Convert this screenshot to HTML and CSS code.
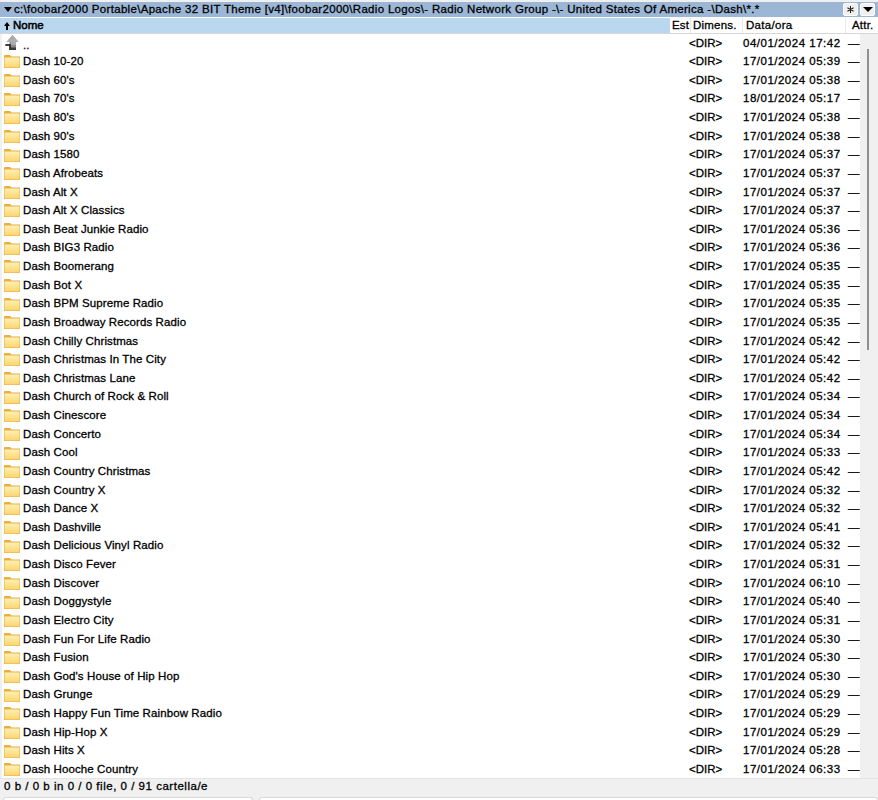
FILE: index.html
```html
<!DOCTYPE html>
<html lang="it">
<head>
<meta charset="utf-8">
<title>Total Commander</title>
<link rel="stylesheet" href="styles.css">
</head>
<body>
<svg class="defs" width="0" height="0" aria-hidden="true">
  <defs>
    <linearGradient id="fg" x1="0" y1="0" x2="0" y2="1"><stop offset="0" stop-color="#fff0b4"/><stop offset="1" stop-color="#fbd56f"/></linearGradient>
    <symbol id="folder" viewBox="0 0 16 13">
      <path d="M0 2V1Q0 0 1 0H6L7.5 1.5H16V13H0Z" fill="#e8ae3e"/>
      <rect x="0.5" y="2.5" width="15" height="10" fill="url(#fg)"/>
    </symbol>
  </defs>
</svg>
<div class="pathbar">
  <svg class="caret" viewBox="0 0 8 5"><path d="M0 0H8L4 5Z"/></svg>
  <span class="pathtext">c:\foobar2000 Portable\Apache 32 BIT Theme [v4]\foobar2000\Radio Logos\- Radio Network Group -\- United States Of America -\Dash\*.*</span>
  <span class="btn"><svg class="star" viewBox="0 0 8 8"><path d="M4 0V8M0.5 2L7.5 6M7.5 2L0.5 6" stroke="#222" stroke-width="1.2" fill="none"/></svg></span>
  <span class="btn"><svg class="btncaret" viewBox="0 0 10 5"><path d="M0 0H10L5 5Z"/></svg></span>
</div>
<div class="header row">
  <span class="c-name"><svg class="uparrow" viewBox="0 0 6 8"><path d="M3 0L6 4H4V8H2V4H0Z"/></svg>Nome</span>
  <span class="c-ext">Est</span>
  <span class="c-size">Dimens.</span>
  <span class="c-date">Data/ora</span>
  <span class="c-attr">Attr.</span>
</div>
<div class="panel">
  <div class="list">
    <div class="row"><span class="c-name"><svg class="icon upicon" viewBox="0 0 16 16"><path d="M7.5 0L13.5 7H11V15H4V11H0.5V9H4.5V7H1.5Z" fill="#8b8b8b"/><path d="M7.5 0L13.5 7H11V10H6V7H1.5Z" fill="#adadad"/><path d="M4 15V11H0.5V9H6V12.5H11V15Z" fill="#3a3a3a"/></svg><span class="up">..</span></span><span class="c-ext"></span><span class="c-size">&lt;DIR&gt;</span><span class="c-date">04/01/2024 17:42</span><span class="c-attr">—</span></div>
    <div class="row"><span class="c-name"><svg class="icon"><use href="#folder"/></svg>Dash 10-20</span><span class="c-ext"></span><span class="c-size">&lt;DIR&gt;</span><span class="c-date">17/01/2024 05:39</span><span class="c-attr">—</span></div>
    <div class="row"><span class="c-name"><svg class="icon"><use href="#folder"/></svg>Dash 60's</span><span class="c-ext"></span><span class="c-size">&lt;DIR&gt;</span><span class="c-date">17/01/2024 05:38</span><span class="c-attr">—</span></div>
    <div class="row"><span class="c-name"><svg class="icon"><use href="#folder"/></svg>Dash 70's</span><span class="c-ext"></span><span class="c-size">&lt;DIR&gt;</span><span class="c-date">18/01/2024 05:17</span><span class="c-attr">—</span></div>
    <div class="row"><span class="c-name"><svg class="icon"><use href="#folder"/></svg>Dash 80's</span><span class="c-ext"></span><span class="c-size">&lt;DIR&gt;</span><span class="c-date">17/01/2024 05:38</span><span class="c-attr">—</span></div>
    <div class="row"><span class="c-name"><svg class="icon"><use href="#folder"/></svg>Dash 90's</span><span class="c-ext"></span><span class="c-size">&lt;DIR&gt;</span><span class="c-date">17/01/2024 05:38</span><span class="c-attr">—</span></div>
    <div class="row"><span class="c-name"><svg class="icon"><use href="#folder"/></svg>Dash 1580</span><span class="c-ext"></span><span class="c-size">&lt;DIR&gt;</span><span class="c-date">17/01/2024 05:37</span><span class="c-attr">—</span></div>
    <div class="row"><span class="c-name"><svg class="icon"><use href="#folder"/></svg>Dash Afrobeats</span><span class="c-ext"></span><span class="c-size">&lt;DIR&gt;</span><span class="c-date">17/01/2024 05:37</span><span class="c-attr">—</span></div>
    <div class="row"><span class="c-name"><svg class="icon"><use href="#folder"/></svg>Dash Alt X</span><span class="c-ext"></span><span class="c-size">&lt;DIR&gt;</span><span class="c-date">17/01/2024 05:37</span><span class="c-attr">—</span></div>
    <div class="row"><span class="c-name"><svg class="icon"><use href="#folder"/></svg>Dash Alt X Classics</span><span class="c-ext"></span><span class="c-size">&lt;DIR&gt;</span><span class="c-date">17/01/2024 05:37</span><span class="c-attr">—</span></div>
    <div class="row"><span class="c-name"><svg class="icon"><use href="#folder"/></svg>Dash Beat Junkie Radio</span><span class="c-ext"></span><span class="c-size">&lt;DIR&gt;</span><span class="c-date">17/01/2024 05:36</span><span class="c-attr">—</span></div>
    <div class="row"><span class="c-name"><svg class="icon"><use href="#folder"/></svg>Dash BIG3 Radio</span><span class="c-ext"></span><span class="c-size">&lt;DIR&gt;</span><span class="c-date">17/01/2024 05:36</span><span class="c-attr">—</span></div>
    <div class="row"><span class="c-name"><svg class="icon"><use href="#folder"/></svg>Dash Boomerang</span><span class="c-ext"></span><span class="c-size">&lt;DIR&gt;</span><span class="c-date">17/01/2024 05:35</span><span class="c-attr">—</span></div>
    <div class="row"><span class="c-name"><svg class="icon"><use href="#folder"/></svg>Dash Bot X</span><span class="c-ext"></span><span class="c-size">&lt;DIR&gt;</span><span class="c-date">17/01/2024 05:35</span><span class="c-attr">—</span></div>
    <div class="row"><span class="c-name"><svg class="icon"><use href="#folder"/></svg>Dash BPM Supreme Radio</span><span class="c-ext"></span><span class="c-size">&lt;DIR&gt;</span><span class="c-date">17/01/2024 05:35</span><span class="c-attr">—</span></div>
    <div class="row"><span class="c-name"><svg class="icon"><use href="#folder"/></svg>Dash Broadway Records Radio</span><span class="c-ext"></span><span class="c-size">&lt;DIR&gt;</span><span class="c-date">17/01/2024 05:35</span><span class="c-attr">—</span></div>
    <div class="row"><span class="c-name"><svg class="icon"><use href="#folder"/></svg>Dash Chilly Christmas</span><span class="c-ext"></span><span class="c-size">&lt;DIR&gt;</span><span class="c-date">17/01/2024 05:42</span><span class="c-attr">—</span></div>
    <div class="row"><span class="c-name"><svg class="icon"><use href="#folder"/></svg>Dash Christmas In The City</span><span class="c-ext"></span><span class="c-size">&lt;DIR&gt;</span><span class="c-date">17/01/2024 05:42</span><span class="c-attr">—</span></div>
    <div class="row"><span class="c-name"><svg class="icon"><use href="#folder"/></svg>Dash Christmas Lane</span><span class="c-ext"></span><span class="c-size">&lt;DIR&gt;</span><span class="c-date">17/01/2024 05:42</span><span class="c-attr">—</span></div>
    <div class="row"><span class="c-name"><svg class="icon"><use href="#folder"/></svg>Dash Church of Rock &amp; Roll</span><span class="c-ext"></span><span class="c-size">&lt;DIR&gt;</span><span class="c-date">17/01/2024 05:34</span><span class="c-attr">—</span></div>
    <div class="row"><span class="c-name"><svg class="icon"><use href="#folder"/></svg>Dash Cinescore</span><span class="c-ext"></span><span class="c-size">&lt;DIR&gt;</span><span class="c-date">17/01/2024 05:34</span><span class="c-attr">—</span></div>
    <div class="row"><span class="c-name"><svg class="icon"><use href="#folder"/></svg>Dash Concerto</span><span class="c-ext"></span><span class="c-size">&lt;DIR&gt;</span><span class="c-date">17/01/2024 05:34</span><span class="c-attr">—</span></div>
    <div class="row"><span class="c-name"><svg class="icon"><use href="#folder"/></svg>Dash Cool</span><span class="c-ext"></span><span class="c-size">&lt;DIR&gt;</span><span class="c-date">17/01/2024 05:33</span><span class="c-attr">—</span></div>
    <div class="row"><span class="c-name"><svg class="icon"><use href="#folder"/></svg>Dash Country Christmas</span><span class="c-ext"></span><span class="c-size">&lt;DIR&gt;</span><span class="c-date">17/01/2024 05:42</span><span class="c-attr">—</span></div>
    <div class="row"><span class="c-name"><svg class="icon"><use href="#folder"/></svg>Dash Country X</span><span class="c-ext"></span><span class="c-size">&lt;DIR&gt;</span><span class="c-date">17/01/2024 05:32</span><span class="c-attr">—</span></div>
    <div class="row"><span class="c-name"><svg class="icon"><use href="#folder"/></svg>Dash Dance X</span><span class="c-ext"></span><span class="c-size">&lt;DIR&gt;</span><span class="c-date">17/01/2024 05:32</span><span class="c-attr">—</span></div>
    <div class="row"><span class="c-name"><svg class="icon"><use href="#folder"/></svg>Dash Dashville</span><span class="c-ext"></span><span class="c-size">&lt;DIR&gt;</span><span class="c-date">17/01/2024 05:41</span><span class="c-attr">—</span></div>
    <div class="row"><span class="c-name"><svg class="icon"><use href="#folder"/></svg>Dash Delicious Vinyl Radio</span><span class="c-ext"></span><span class="c-size">&lt;DIR&gt;</span><span class="c-date">17/01/2024 05:32</span><span class="c-attr">—</span></div>
    <div class="row"><span class="c-name"><svg class="icon"><use href="#folder"/></svg>Dash Disco Fever</span><span class="c-ext"></span><span class="c-size">&lt;DIR&gt;</span><span class="c-date">17/01/2024 05:31</span><span class="c-attr">—</span></div>
    <div class="row"><span class="c-name"><svg class="icon"><use href="#folder"/></svg>Dash Discover</span><span class="c-ext"></span><span class="c-size">&lt;DIR&gt;</span><span class="c-date">17/01/2024 06:10</span><span class="c-attr">—</span></div>
    <div class="row"><span class="c-name"><svg class="icon"><use href="#folder"/></svg>Dash Doggystyle</span><span class="c-ext"></span><span class="c-size">&lt;DIR&gt;</span><span class="c-date">17/01/2024 05:40</span><span class="c-attr">—</span></div>
    <div class="row"><span class="c-name"><svg class="icon"><use href="#folder"/></svg>Dash Electro City</span><span class="c-ext"></span><span class="c-size">&lt;DIR&gt;</span><span class="c-date">17/01/2024 05:31</span><span class="c-attr">—</span></div>
    <div class="row"><span class="c-name"><svg class="icon"><use href="#folder"/></svg>Dash Fun For Life Radio</span><span class="c-ext"></span><span class="c-size">&lt;DIR&gt;</span><span class="c-date">17/01/2024 05:30</span><span class="c-attr">—</span></div>
    <div class="row"><span class="c-name"><svg class="icon"><use href="#folder"/></svg>Dash Fusion</span><span class="c-ext"></span><span class="c-size">&lt;DIR&gt;</span><span class="c-date">17/01/2024 05:30</span><span class="c-attr">—</span></div>
    <div class="row"><span class="c-name"><svg class="icon"><use href="#folder"/></svg>Dash God's House of Hip Hop</span><span class="c-ext"></span><span class="c-size">&lt;DIR&gt;</span><span class="c-date">17/01/2024 05:30</span><span class="c-attr">—</span></div>
    <div class="row"><span class="c-name"><svg class="icon"><use href="#folder"/></svg>Dash Grunge</span><span class="c-ext"></span><span class="c-size">&lt;DIR&gt;</span><span class="c-date">17/01/2024 05:29</span><span class="c-attr">—</span></div>
    <div class="row"><span class="c-name"><svg class="icon"><use href="#folder"/></svg>Dash Happy Fun Time Rainbow Radio</span><span class="c-ext"></span><span class="c-size">&lt;DIR&gt;</span><span class="c-date">17/01/2024 05:29</span><span class="c-attr">—</span></div>
    <div class="row"><span class="c-name"><svg class="icon"><use href="#folder"/></svg>Dash Hip-Hop X</span><span class="c-ext"></span><span class="c-size">&lt;DIR&gt;</span><span class="c-date">17/01/2024 05:29</span><span class="c-attr">—</span></div>
    <div class="row"><span class="c-name"><svg class="icon"><use href="#folder"/></svg>Dash Hits X</span><span class="c-ext"></span><span class="c-size">&lt;DIR&gt;</span><span class="c-date">17/01/2024 05:28</span><span class="c-attr">—</span></div>
    <div class="row"><span class="c-name"><svg class="icon"><use href="#folder"/></svg>Dash Hooche Country</span><span class="c-ext"></span><span class="c-size">&lt;DIR&gt;</span><span class="c-date">17/01/2024 06:33</span><span class="c-attr">—</span></div>
  </div>
  <div class="scrollbar"><div class="thumb"></div></div>
</div>
<div class="status">0 b / 0 b in 0 / 0 file, 0 / 91 cartella/e</div>
<div class="tabs"><span class="tab t1"></span><span class="tab t2"></span></div>
</body>
</html>
```
FILE: styles.css
```css
* { box-sizing: border-box; }
html, body { margin: 0; padding: 0; }
body {
  width: 878px; height: 800px; overflow: hidden;
  background: #f0f0f0; color: #000;
  font: 11.5px/1 "Liberation Sans", Arial, sans-serif;
  display: flex; flex-direction: column;
  -webkit-text-stroke: 0.3px #000;
}
.defs { position: absolute; }
.pathbar {
  height: 18px; flex: none; background: #9cb7d5;
  display: flex; align-items: center; padding: 0 3px 0 4px;
  border-top: 2px solid #f0f0f0; border-bottom: 1px solid #fff;
}
.caret { width: 8px; height: 5px; flex: none; margin-right: 2px; }
.pathtext { flex: 1; white-space: nowrap; overflow: hidden; letter-spacing: 0.31px; }
.btn {
  width: 15px; height: 13px; flex: none; margin-left: 2px;
  background: #f0f0f0; border: 1px solid #fff; border-radius: 2px;
  display: flex; align-items: center; justify-content: center;
}
.star { width: 7px; height: 7px; }
.btncaret { width: 10px; height: 5px; }
.row {
  display: grid; height: 18.63px; align-items: center;
}
.header {
  height: 16px; flex: none; background: #fff;
  border-bottom: 1px solid #d6d6d6;
  grid-template-columns: 670px 20px 52px 103px 33px;
  letter-spacing: 0.2px;
}
.header > span { height: 100%; display: flex; align-items: center; }
.header .c-name { background: #b9d7ee; padding-left: 4px; letter-spacing: 0; -webkit-text-stroke: 0.5px #000; }
.header .c-ext { padding-left: 2px; }
.header .c-size { padding-left: 2px; border-left: 1px solid #e8e8e8; }
.header .c-date { padding-left: 3px; border-left: 1px solid #e8e8e8; letter-spacing: 0.3px; }
.header .c-attr { padding-left: 6px; border-left: 1px solid #e8e8e8; }
.c-name { display: flex; align-items: center; white-space: nowrap; letter-spacing: 0.1px; }
.c-date { white-space: nowrap; letter-spacing: 0.5px; }
.uparrow { width: 6px; height: 8px; margin-right: 3px; flex: none; }
.panel { flex: 1; min-height: 0; display: flex; background: #f0f0f0; padding-left: 2px; overflow: hidden; }
.list { width: 858px; flex: none; background: #fff; overflow: hidden; }
.list .row { grid-template-columns: 662px 25px 54px 105px 1fr; }
.list .c-name { padding-left: 2px; }
.icon { width: 16px; height: 13px; margin-right: 3px; flex: none; overflow: visible; }
.upicon { height: 16px; margin-bottom: 1px; margin-left: 1px; margin-right: 2px; }
.up { color: #333; position: relative; top: 2px; }
.scrollbar { flex: 1; position: relative; }
.thumb { position: absolute; left: 7px; top: 15px; width: 2px; height: 301px; background: #8f8f8f; }
.status {
  height: 19px; flex: none; background: #f0f0f0; padding: 2px 0 0 4px;
  letter-spacing: 0.52px;
  border-top: 1px solid #e4e4e4;
}
.tabs { height: 3px; flex: none; display: flex; gap: 6px; padding-left: 3px; }
.tab { display: block; height: 3px; background: #fff; border: 1px solid #d9d9d9; border-bottom: 0; border-radius: 3px 3px 0 0; }
.t1 { width: 250px; }
.t2 { flex: 1; }
```
